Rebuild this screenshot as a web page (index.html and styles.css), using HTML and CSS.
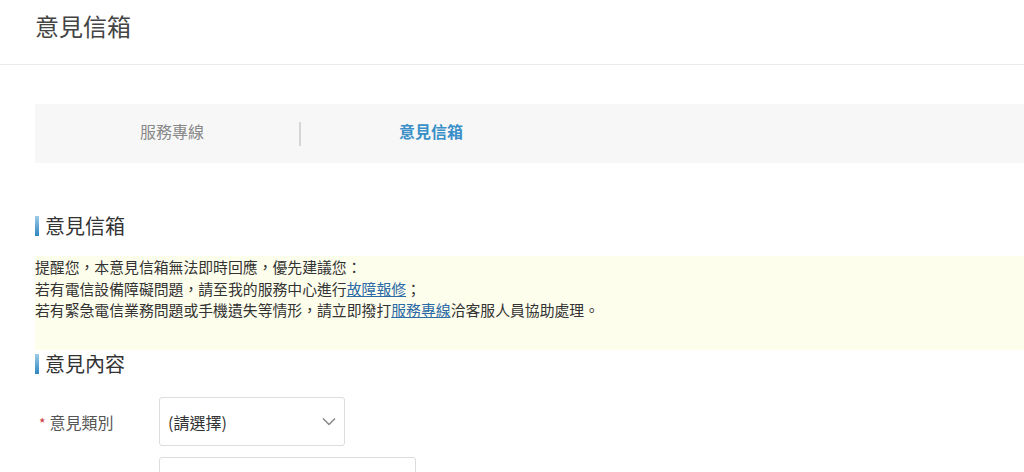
FILE: index.html
```html
<!DOCTYPE html>
<html lang="zh-Hant">
<head>
    <meta charset="UTF-8">
    <meta name="viewport" content="width=device-width, initial-scale=1.0">
    <title>意見信箱</title>
    <link rel="stylesheet" href="styles.css">
</head>
<body>
    <header class="page-header">
        <h1>意見信箱</h1>
    </header>
    <main class="content">
        <nav class="tabs">
            <a class="tab" href="#">服務專線</a>
            <span class="tab-divider"></span>
            <a class="tab active" href="#">意見信箱</a>
        </nav>

        <h2 class="section-title">意見信箱</h2>
        <div class="notice">
            <p>提醒您，本意見信箱無法即時回應，優先建議您：</p>
            <p>若有電信設備障礙問題，請至我的服務中心進行<a href="#">故障報修</a>；</p>
            <p>若有緊急電信業務問題或手機遺失等情形，請立即撥打<a href="#">服務專線</a>洽客服人員協助處理。</p>
        </div>

        <h2 class="section-title">意見內容</h2>
        <form class="form">
            <div class="form-row">
                <label class="form-label"><span class="required">*</span>意見類別</label>
                <div class="select">
                    <span>(請選擇)</span>
                    <svg width="14" height="9" viewBox="0 0 14 9"><path d="M1 1.5 L7 7.5 L13 1.5" fill="none" stroke="#888" stroke-width="1.5"/></svg>
                </div>
            </div>
            <div class="form-row">
                <span class="form-label"></span>
                <div class="input"></div>
            </div>
        </form>
    </main>
</body>
</html>
```

FILE: styles.css
```css
body {
    margin: 0;
    padding: 0;
    font-family: "Noto Sans CJK TC", "Noto Sans", sans-serif;
    color: #333;
    background: #fff;
    overflow: hidden;
}

.page-header {
    height: 64px;
    border-bottom: 1px solid #ebebeb;
    display: flex;
    align-items: center;
    padding-left: 35px;
}

.page-header h1 {
    margin: 0 0 14px;
    font-size: 24px;
    font-weight: normal;
    color: #444;
}

.content {
    margin-left: 35px;
}

.tabs {
    display: flex;
    align-items: center;
    height: 59px;
    margin-top: 39px;
    background: #f7f7f7;
}

.tab {
    box-sizing: border-box;
    width: 264px;
    padding-left: 10px;
    margin-bottom: 5px;
    text-align: center;
    font-size: 16px;
    color: #888;
    text-decoration: none;
}

.tab.active {
    padding-left: 0;
    padding-right: 4px;
    color: #3a8fc8;
    font-weight: bold;
}

.tab-divider {
    width: 2px;
    height: 24px;
    background: #d6d6d6;
}

.section-title {
    margin: 0;
    font-size: 20px;
    font-weight: normal;
    line-height: 28px;
    color: #333;
    display: flex;
    align-items: center;
}

.section-title::before {
    content: "";
    width: 4px;
    height: 20px;
    margin-right: 6px;
    background: linear-gradient(#9fcbe6, #2d86c0);
}

.tabs + .section-title {
    margin-top: 49px;
}

.notice {
    margin-top: 16px;
    height: 94px;
    background: #fefeed;
    font-size: 14.85px;
    line-height: 21.5px;
}

.notice p {
    margin: 0;
}

.notice a {
    color: #2c6aa6;
}

.form {
    margin-top: 19px;
}

.form-row {
    display: flex;
    align-items: center;
    margin-bottom: 11px;
}

.form-label {
    width: 120px;
    padding-left: 4px;
    font-size: 16px;
    color: #555;
}

.required {
    color: #d0353a;
    margin-right: 4px;
    font-size: 14px;
}

.select {
    width: 168px;
    height: 47px;
    border: 1px solid #ddd;
    border-radius: 3px;
    display: flex;
    align-items: center;
    justify-content: space-between;
    padding: 0 8px;
    font-size: 16px;
    color: #333;
}

.input {
    width: 255px;
    height: 47px;
    border: 1px solid #ddd;
    border-radius: 3px;
}
```
